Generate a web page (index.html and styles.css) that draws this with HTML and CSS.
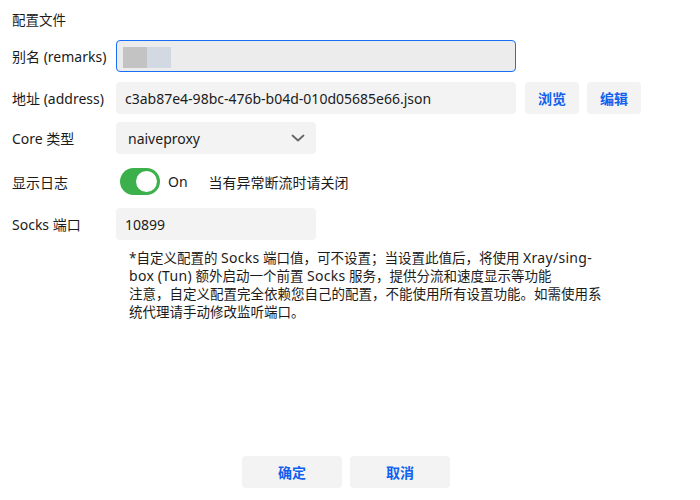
FILE: index.html
```html
<!DOCTYPE html>
<html lang="zh-CN">
<head>
<meta charset="utf-8">
<link rel="stylesheet" href="styles.css">
</head>
<body>
<div class="page">
  <div class="form">
    <div class="title">配置文件</div>
    <div class="row r1">
      <div class="label">别名 (remarks)</div>
      <div class="input focused wide">
        <span class="blur"><span class="b1"></span><span class="b2"></span></span>
      </div>
    </div>
    <div class="row r2">
      <div class="label">地址 (address)</div>
      <div class="input wide">c3ab87e4-98bc-476b-b04d-010d05685e66.json</div>
      <button class="btn small first">浏览</button>
      <button class="btn small">编辑</button>
    </div>
    <div class="row r3">
      <div class="label">Core 类型</div>
      <div class="input select">
        <span class="sel-text">naiveproxy</span>
        <svg class="chev" width="14" height="8" viewBox="0 0 14 8"><path d="M1.5 1.5 L7 6.5 L12.5 1.5" fill="none" stroke="#666" stroke-width="1.8" stroke-linecap="round" stroke-linejoin="round"/></svg>
      </div>
    </div>
    <div class="row r4">
      <div class="label">显示日志</div>
      <span class="toggle"><span class="knob"></span></span>
      <span class="on">On</span>
      <span class="hint">当有异常断流时请关闭</span>
    </div>
    <div class="row r5">
      <div class="label">Socks 端口</div>
      <div class="input short">10899</div>
    </div>
    <p class="help">*自定义配置的 <span class="lat">Socks</span> 端口值，可不设置；当设置此值后，将使用 <span class="lat">Xray/sing-box</span> <span class="lat">(Tun)</span> 额外启动一个前置 <span class="lat">Socks</span> 服务，提供分流和速度显示等功能<br>注意，自定义配置完全依赖您自己的配置，不能使用所有设置功能。如需使用系统代理请手动修改监听端口。</p>
  </div>
  <div class="footer">
    <button class="btn big">确定</button>
    <button class="btn big">取消</button>
  </div>
</div>
</body>
</html>
```

FILE: styles.css
```css
html, body {
  margin: 0;
  padding: 0;
  background: #ffffff;
}
body {
  font-family: "Noto Sans", "Noto Sans CJK SC", sans-serif;
  font-size: 14px;
  color: #1b1b1b;
}
.page {
  height: 500px;
  display: flex;
  flex-direction: column;
  justify-content: space-between;
  box-sizing: border-box;
  padding: 12px 0 12px 12px;
}
.title {
  font-size: 13.5px;
  line-height: 16px;
  height: 16px;
}
.row {
  display: flex;
  align-items: center;
  height: 32px;
}
.r1 { margin-top: 12px; }
.r2 { margin-top: 10px; }
.r3 { margin-top: 8px; }
.r4 { margin-top: 14px; height: 27px; }
.r5 { margin-top: 13px; }
.label {
  width: 104px;
  flex: none;
  white-space: nowrap;
}
.input {
  box-sizing: border-box;
  height: 32px;
  background: #f3f3f3;
  border-radius: 4px;
  display: flex;
  align-items: center;
  padding-left: 9px;
  white-space: nowrap;
  overflow: hidden;
}
.wide { width: 400px; }
.short { width: 200px; }
.focused {
  background: #ececec;
  border: 1px solid #1a6ef5;
  padding-left: 6px;
}
.blur { display: flex; height: 21px; margin-top: 2px; }
.b1 { width: 24px; background: #c3c3c3; }
.b2 { width: 24px; background: #d3d9e2; }
.select {
  width: 200px;
  padding-left: 12px;
  justify-content: space-between;
  padding-right: 11px;
}
.chev { display: block; }
.btn {
  border: none;
  background: #f3f3f3;
  border-radius: 4px;
  color: #1160ee;
  font-family: "Noto Sans CJK SC", sans-serif;
  font-weight: 700;
  font-size: 14px;
  height: 32px;
  padding: 0;
  cursor: pointer;
}
.small { width: 54px; margin-left: 8px; }
.small.first { margin-left: 9px; }
.big { width: 100px; }
.toggle {
  margin-left: 4px;
  width: 40px;
  height: 27px;
  border-radius: 14px;
  background: #3bb04b;
  display: flex;
  align-items: center;
  justify-content: flex-end;
  box-sizing: border-box;
  padding-right: 3px;
}
.knob {
  width: 21px;
  height: 21px;
  border-radius: 50%;
  background: #ffffff;
}
.on { margin-left: 8px; }
.hint { margin-left: 21px; font-size: 14px; }
.help {
  margin: 9px 0 0 117px;
  width: 480px;
  font-size: 13.5px;
  line-height: 18px;
}
.lat { font-size: 14px; letter-spacing: 0.3px; }
.footer {
  display: flex;
  justify-content: center;
  gap: 8px;
  padding-right: 20px;
}
```
